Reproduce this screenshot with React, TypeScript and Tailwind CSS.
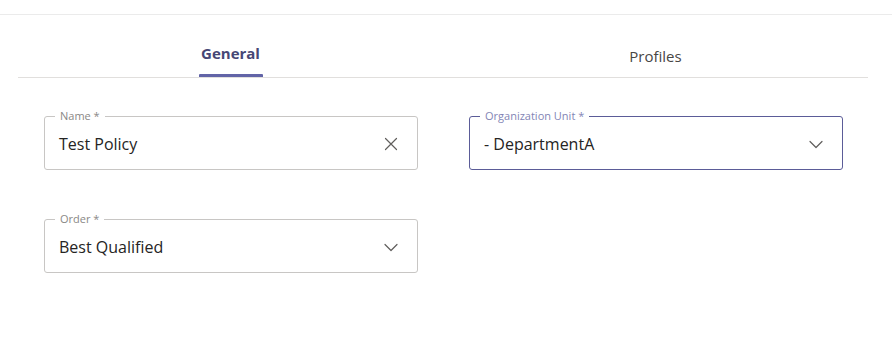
import { ReactNode } from 'react';

function Chevron() {
  return (
    <svg width="16" height="16" viewBox="0 0 16 16" fill="none">
      <path d="M2 5.5l6 6 6-6" stroke="#605e5c" strokeWidth="1.2" strokeLinecap="round" strokeLinejoin="round" />
    </svg>
  );
}

function Cross() {
  return (
    <svg width="16" height="16" viewBox="0 0 16 16" fill="none">
      <path d="M2.5 2.5l11 11M13.5 2.5l-11 11" stroke="#605e5c" strokeWidth="1.2" strokeLinecap="round" />
    </svg>
  );
}

interface FieldProps {
  label: string;
  value: string;
  icon: ReactNode;
  focused?: boolean;
}

function Field({ label, value, icon, focused }: FieldProps) {
  return (
    <fieldset
      className={
        'rounded-[3px] h-[60px] px-0 flex items-center ' +
        (focused ? 'border-[1.5px] border-[#5b5c98]' : 'border border-[#c8c6c4]')
      }
    >
      <legend
        className={
          'ml-[10px] px-[5px] text-[11px] leading-[12px] ' +
          (focused ? 'text-[#8385b5]' : 'text-[#8a8886]')
        }
      >
        {label}
      </legend>
      <div className="flex items-center justify-between w-full pl-[14px] pr-[18px] -mt-[4px]">
        <span className="text-[16px] text-[#252423]">{value}</span>
        {icon}
      </div>
    </fieldset>
  );
}

export default function App() {
  return (
    <div className="w-[892px] h-[347px] bg-white" style={{ fontFamily: '"Segoe UI", "Open Sans", "Noto Sans", sans-serif' }}>
      <div className="h-[14px]" />
      <div className="border-t border-[#ebebeb]" />
      <div className="ml-[18px] mr-[24px] flex border-b border-[#e1dfdd] h-[63px]">
        <div className="flex-1 flex justify-center">
          <div className="flex flex-col justify-end items-center">
            <span className="text-[15px] font-bold text-[#464775] leading-none px-[2px]">General</span>
            <div className="mt-[13px] h-[3px] w-[64px] bg-[#6264a7] rounded-t-[1px]" />
          </div>
        </div>
        <div className="flex-1 flex justify-center items-end pb-[13px]">
          <span className="text-[15px] text-[#484644] leading-none">Profiles</span>
        </div>
      </div>
      <div className="ml-[44px] mr-[49px] pt-[32px] grid grid-cols-2 gap-x-[51px] gap-y-[43px]">
        <Field label="Name *" value="Test Policy" icon={<Cross />} />
        <Field label="Organization Unit *" value="- DepartmentA" icon={<Chevron />} focused />
        <Field label="Order *" value="Best Qualified" icon={<Chevron />} />
      </div>
    </div>
  );
}
